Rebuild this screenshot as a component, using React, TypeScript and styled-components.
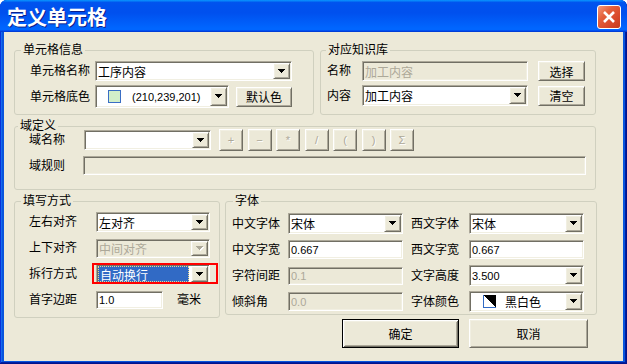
import React from "react";
import styled, { createGlobalStyle, css } from "styled-components";

const GlobalStyle = createGlobalStyle`
  html, body {
    margin: 0;
    padding: 0;
    background: #ffffff;
  }
  body {
    font-family: "Liberation Sans", "Noto Sans CJK SC", sans-serif;
    font-size: 12px;
    color: #000;
  }
`;

// classic 3D edges as drawn by old Win32 controls under the XP theme
const raised = css`
  border: 1px solid;
  border-color: #ffffff #716f64 #716f64 #ffffff;
  box-shadow: inset 1px 1px 0 #f1efe2, inset -1px -1px 0 #aca899;
`;
const sunken = css`
  border: 1px solid;
  border-color: #aca899 #ffffff #ffffff #aca899;
  box-shadow: inset 1px 1px 0 #716f64, inset -1px -1px 0 #f1efe2;
`;

const Window = styled.div`
  width: 627px;
  height: 364px;
  box-sizing: border-box;
  display: flex;
  flex-direction: column;
  background: #0855dd;
  border-radius: 7px 7px 0 0;
  overflow: hidden;
  box-shadow: inset -1px -1px #00138c, inset 1px 1px #0831d9,
    inset -2px -2px #001ea0, inset 2px 2px #166aee;
`;

const TitleBar = styled.div`
  height: 32px;
  flex: none;
  box-sizing: border-box;
  padding: 2px 6px 0 7px;
  display: flex;
  align-items: center;
  justify-content: space-between;
  background: linear-gradient(
    180deg,
    #0997ff,
    #0053ee 8%,
    #0050ee 40%,
    #0066ff 88%,
    #0066ff 93%,
    #005bff 95%,
    #003dd7 96%,
    #003dd7
  );
`;

const Title = styled.div`
  color: #fff;
  font-family: "Noto Sans CJK SC", sans-serif;
  font-weight: 700;
  font-size: 20px;
  line-height: 24px;
  text-shadow: 1px 1px 0 #0a1e8c;
`;

const CloseButton = styled.div`
  width: 24px;
  height: 24px;
  box-sizing: border-box;
  border: 1px solid #ffffff;
  border-radius: 3px;
  background: linear-gradient(135deg, #f49a7c 0%, #e4603c 35%, #d8482a 70%, #c33a1c 100%);
  display: flex;
  align-items: center;
  justify-content: center;
`;

const Client = styled.div`
  flex: 1;
  margin: 0 4px 3px 4px;
  padding: 18px 0 0 10px;
  background: #ece9d8;
  display: flex;
  flex-direction: column;
`;

const Band = styled.div<{ $mt?: number; $gap?: number }>`
  display: flex;
  align-items: flex-start;
  gap: ${(p) => p.$gap ?? 0}px;
  margin-top: ${(p) => p.$mt ?? 0}px;
`;

const Column = styled.div`
  display: flex;
  flex-direction: column;
`;

const Group = styled.div<{ $w: number; $h: number; $pad: string; $gap: number }>`
  position: relative;
  flex: none;
  box-sizing: border-box;
  width: ${(p) => p.$w}px;
  height: ${(p) => p.$h}px;
  padding: ${(p) => p.$pad};
  border: 1px solid #d0d0bf;
  border-radius: 3px;
  display: flex;
  flex-direction: column;
  gap: ${(p) => p.$gap}px;
`;

const Legend = styled.span<{ $left: number }>`
  position: absolute;
  top: -8px;
  left: ${(p) => p.$left}px;
  padding: 0 2px;
  line-height: 14px;
  background: #ece9d8;
  font-size: 12px;
  white-space: nowrap;
`;

const Row = styled.div<{ $gap?: number }>`
  display: flex;
  align-items: center;
  gap: ${(p) => p.$gap ?? 0}px;
`;

const Grid = styled.div<{ $cols: string; $row: number; $gap: number }>`
  display: grid;
  grid-template-columns: ${(p) => p.$cols};
  grid-auto-rows: ${(p) => p.$row}px;
  row-gap: ${(p) => p.$gap}px;
  align-items: center;
`;

const Label = styled.span<{ $w?: number }>`
  flex: none;
  width: ${(p) => (p.$w ? `${p.$w}px` : "auto")};
  line-height: 14px;
  font-size: 12px;
  white-space: nowrap;
`;

const Combo = styled.div<{ $w: number; $h: number; $disabled?: boolean }>`
  ${sunken}
  position: relative;
  box-sizing: border-box;
  flex: none;
  width: ${(p) => p.$w}px;
  height: ${(p) => p.$h}px;
  padding: 1px;
  display: flex;
  align-items: center;
  background: ${(p) => (p.$disabled ? "#ece9d8" : "#ffffff")};
`;

const Marked = styled.div`
  position: relative;
  display: flex;
  &::after {
    content: "";
    position: absolute;
    left: -4px;
    right: 1px;
    top: -1px;
    bottom: 0;
    border: 2px solid #ff0000;
    pointer-events: none;
  }
`;

const Value = styled.span<{ $num?: boolean; $muted?: boolean; $selected?: boolean }>`
  flex: 1;
  min-width: 0;
  align-self: stretch;
  display: flex;
  align-items: center;
  padding-left: 1px;
  font-size: ${(p) => (p.$num ? 11 : 12)}px;
  color: ${(p) => (p.$muted ? "#aca899" : "#000")};
  white-space: nowrap;
  overflow: hidden;
  ${(p) =>
    p.$selected &&
    css`
      margin-right: 2px;
      padding-left: 2px;
      background: #316ac5;
      color: #fff;
      outline: 1px dotted #e8d890;
      outline-offset: -1px;
    `}
`;

const DropButton = styled.span`
  ${raised}
  flex: none;
  align-self: stretch;
  box-sizing: border-box;
  width: 17px;
  background: #ece9d8;
  display: flex;
  align-items: center;
  justify-content: center;
`;

const Swatch = styled.span<{ $c: string }>`
  flex: none;
  box-sizing: border-box;
  width: 13px;
  height: 13px;
  margin: 0 10px 0 11px;
  border: 1px solid #3a6ec4;
  background: ${(p) => p.$c};
`;

const ColorMark = styled.svg`
  flex: none;
  margin: 0 8px 0 12px;
`;

const Edit = styled.div<{ $w: number; $h: number; $disabled?: boolean; $num?: boolean }>`
  ${sunken}
  flex: none;
  box-sizing: border-box;
  width: ${(p) => p.$w}px;
  height: ${(p) => p.$h}px;
  padding: 1px 1px 1px 2px;
  display: flex;
  align-items: center;
  background: ${(p) => (p.$disabled ? "#ece9d8" : "#ffffff")};
  color: ${(p) => (p.$disabled ? "#aca899" : "#000")};
  font-size: ${(p) => (p.$num ? 11 : 12)}px;
  white-space: nowrap;
  overflow: hidden;
`;

const Button = styled.div<{
  $w: number;
  $h: number;
  $ml?: number;
  $default?: boolean;
  $disabled?: boolean;
}>`
  ${raised}
  flex: none;
  box-sizing: border-box;
  width: ${(p) => p.$w}px;
  height: ${(p) => p.$h}px;
  margin-left: ${(p) => p.$ml ?? 0}px;
  background: #ece9d8;
  display: flex;
  align-items: center;
  justify-content: center;
  font-size: 12px;
  ${(p) =>
    p.$default &&
    css`
      border: 1px solid #000;
      box-shadow: inset 1px 1px 0 #ffffff, inset -1px -1px 0 #716f64,
        inset 2px 2px 0 #f1efe2, inset -2px -2px 0 #aca899;
    `}
  ${(p) =>
    p.$disabled &&
    css`
      color: #aca899;
      text-shadow: 1px 1px 0 #ffffff;
      font-size: 11px;
    `}
`;

const OpBar = styled.div`
  display: flex;
  gap: 4.5px;
  margin-left: 8px;
`;

const Actions = styled.div`
  display: flex;
  justify-content: flex-end;
  gap: 10px;
  margin-top: 4px;
  padding-right: 9px;
`;

const Arrow = ({ disabled }: { disabled?: boolean }) => (
  <svg width="8" height="5" viewBox="0 0 8 5" shapeRendering="crispEdges">
    {disabled && (
      <path d="M1 1h7v1h-1v1h-1v1h-1v1h-1v-1h-1v-1h-1v-1h-1z" fill="#ffffff" />
    )}
    <path
      d="M0 0h7v1h-1v1h-1v1h-1v1h-1v-1h-1v-1h-1v-1h-1z"
      fill={disabled ? "#aca899" : "#000000"}
    />
  </svg>
);

const ops = ["+", "−", "*", "/", "(", ")", "Σ"];

export default function App() {
  return (
    <>
      <GlobalStyle />
      <Window>
        <TitleBar>
          <Title>定义单元格</Title>
          <CloseButton>
            <svg width="14" height="14" viewBox="0 0 14 14">
              <path d="M2 2L12 12M12 2L2 12" stroke="#fff" strokeWidth="2.6" />
            </svg>
          </CloseButton>
        </TitleBar>
        <Client>
          <Band $gap={6}>
            <Group $w={300} $h={65} $pad="10px 0 0 15px" $gap={4}>
              <Legend $left={6}>单元格信息</Legend>
              <Row>
                <Label $w={65}>单元格名称</Label>
                <Combo $w={197} $h={20}>
                  <Value>工序内容</Value>
                  <DropButton>
                    <Arrow />
                  </DropButton>
                </Combo>
              </Row>
              <Row>
                <Label $w={65}>单元格底色</Label>
                <Combo $w={134} $h={23}>
                  <Swatch $c="rgb(210,239,201)" />
                  <Value $num>(210,239,201)</Value>
                  <DropButton>
                    <Arrow />
                  </DropButton>
                </Combo>
                <Button $w={56} $h={20} $ml={7}>
                  默认色
                </Button>
              </Row>
            </Group>
            <Group $w={276} $h={65} $pad="10px 0 0 6px" $gap={4}>
              <Legend $left={5}>对应知识库</Legend>
              <Row $gap={10}>
                <Label $w={25}>名称</Label>
                <Edit $w={166} $h={20} $disabled>
                  加工内容
                </Edit>
                <Button $w={47} $h={20}>
                  选择
                </Button>
              </Row>
              <Row $gap={10}>
                <Label $w={25}>内容</Label>
                <Combo $w={166} $h={21}>
                  <Value>加工内容</Value>
                  <DropButton>
                    <Arrow />
                  </DropButton>
                </Combo>
                <Button $w={47} $h={20}>
                  清空
                </Button>
              </Row>
            </Group>
          </Band>

          <Band $mt={11}>
            <Group $w={582} $h={64} $pad="2px 0 0 14px" $gap={5}>
              <Legend $left={3}>域定义</Legend>
              <Row>
                <Label $w={55}>域名称</Label>
                <Combo $w={127} $h={20}>
                  <Value />
                  <DropButton>
                    <Arrow />
                  </DropButton>
                </Combo>
                <OpBar>
                  {ops.map((op) => (
                    <Button key={op} $w={24} $h={22} $disabled>
                      {op}
                    </Button>
                  ))}
                </OpBar>
              </Row>
              <Row>
                <Label $w={54}>域规则</Label>
                <Edit $w={503} $h={19} $disabled />
              </Row>
            </Group>
          </Band>

          <Band $mt={11} $gap={5}>
            <Group $w={206} $h={117} $pad="10px 0 0 14px" $gap={0}>
              <Legend $left={6}>填写方式</Legend>
              <Grid $cols="67px auto" $row={20} $gap={6}>
                <Label>左右对齐</Label>
                <Combo $w={114} $h={20}>
                  <Value>左对齐</Value>
                  <DropButton>
                    <Arrow />
                  </DropButton>
                </Combo>
                <Label>上下对齐</Label>
                <Combo $w={114} $h={19} $disabled>
                  <Value $muted>中间对齐</Value>
                  <DropButton>
                    <Arrow disabled />
                  </DropButton>
                </Combo>
                <Label>拆行方式</Label>
                <Marked>
                  <Combo $w={114} $h={20}>
                    <Value $selected>自动换行</Value>
                    <DropButton>
                      <Arrow />
                    </DropButton>
                  </Combo>
                </Marked>
                <Label>首字边距</Label>
                <Row $gap={14}>
                  <Edit $w={67} $h={18} $num>
                    1.0
                  </Edit>
                  <Label>毫米</Label>
                </Row>
              </Grid>
            </Group>

            <Column>
              <Group $w={372} $h={114} $pad="11px 0 0 6px" $gap={0}>
                <Legend $left={7}>字体</Legend>
                <Grid $cols="56px 115px 8px 58px 115px" $row={21} $gap={5}>
                  <Label>中文字体</Label>
                  <Combo $w={115} $h={21}>
                    <Value>宋体</Value>
                    <DropButton>
                      <Arrow />
                    </DropButton>
                  </Combo>
                  <span />
                  <Label>西文字体</Label>
                  <Combo $w={115} $h={21}>
                    <Value>宋体</Value>
                    <DropButton>
                      <Arrow />
                    </DropButton>
                  </Combo>

                  <Label>中文字宽</Label>
                  <Edit $w={115} $h={19} $num>
                    0.667
                  </Edit>
                  <span />
                  <Label>西文字宽</Label>
                  <Edit $w={115} $h={19} $num>
                    0.667
                  </Edit>

                  <Label>字符间距</Label>
                  <Edit $w={115} $h={18} $num $disabled>
                    0.1
                  </Edit>
                  <span />
                  <Label>文字高度</Label>
                  <Combo $w={115} $h={21}>
                    <Value $num>3.500</Value>
                    <DropButton>
                      <Arrow />
                    </DropButton>
                  </Combo>

                  <Label>倾斜角</Label>
                  <Edit $w={115} $h={19} $num $disabled>
                    0.0
                  </Edit>
                  <span />
                  <Label>字体颜色</Label>
                  <Combo $w={115} $h={21}>
                    <ColorMark width="13" height="13" viewBox="0 0 13 13" shapeRendering="crispEdges">
                      <rect x="0.5" y="0.5" width="12" height="12" fill="#fff" stroke="#316ac5" />
                      <polygon points="0,0 13,0 13,13" fill="#000" />
                    </ColorMark>
                    <Value>黑白色</Value>
                    <DropButton>
                      <Arrow />
                    </DropButton>
                  </Combo>
                </Grid>
              </Group>
              <Actions>
                <Button $w={117} $h={29} $default>
                  确定
                </Button>
                <Button $w={119} $h={29}>
                  取消
                </Button>
              </Actions>
            </Column>
          </Band>
        </Client>
      </Window>
    </>
  );
}
